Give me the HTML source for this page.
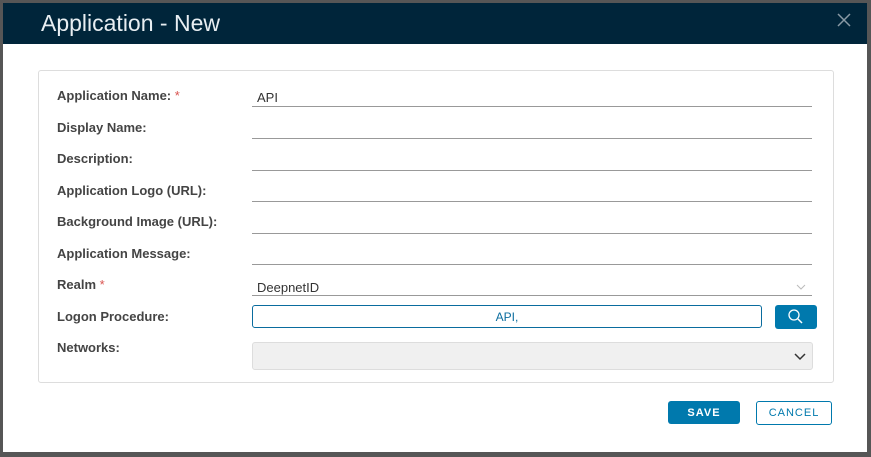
<!DOCTYPE html>
<html><head><style>
body{margin:0;width:871px;height:457px;background:#565656;position:relative;overflow:hidden;font-family:"Liberation Sans",sans-serif}
.dlg{position:absolute;left:3px;top:3px;width:864px;height:449px;background:#fff}
.hd{height:41px;background:#00253a;color:#e8eef2;font-size:23px;line-height:40px;padding-left:38px}
.x{position:absolute;right:16px;top:10px}
.card{position:absolute;left:35px;top:67px;width:794px;height:311px;border:1px solid #ddd;border-radius:3px}
.lb{position:absolute;left:54px;font-size:13px;font-weight:bold;color:#444}
.req{color:#d9534f;font-weight:normal}
.in{position:absolute;left:249px;width:560px;height:20px;border-bottom:1px solid #999;font-size:13px;color:#333;padding-left:5px;box-sizing:border-box;line-height:24px}
.btn{position:absolute;font-size:11px;font-weight:bold;letter-spacing:1px;text-align:center;line-height:24px;border-radius:3px}
</style></head><body>
<div class="dlg">
<div class="hd">Application - New</div>
<svg class="x" width="14" height="14"><path d="M1 1L13 13M13 1L1 13" stroke="#8a9aa5" stroke-width="1.5"/></svg>
<div class="card"></div>
<div class="lb" style="top:85px">Application Name: <span class="req">*</span></div>
<div class="in" style="top:83px;height:21px">API</div>
<div class="lb" style="top:117px">Display Name:</div><div class="in" style="top:116px"></div>
<div class="lb" style="top:148px">Description:</div><div class="in" style="top:148px"></div>
<div class="lb" style="top:180px">Application Logo (URL):</div><div class="in" style="top:179px"></div>
<div class="lb" style="top:211px">Background Image (URL):</div><div class="in" style="top:211px"></div>
<div class="lb" style="top:243px">Application Message:</div><div class="in" style="top:242px"></div>
<div class="lb" style="top:274px">Realm <span class="req">*</span></div>
<div class="in" style="top:273px">DeepnetID<svg style="position:absolute;right:6px;top:8px" width="10" height="6"><path d="M1 1L5 5L9 1" stroke="#bbb" fill="none"/></svg></div>
<div class="lb" style="top:306px">Logon Procedure:</div>
<div style="position:absolute;left:249px;top:302px;width:510px;height:23px;border:1px solid #0a6c9e;border-radius:3px;box-sizing:border-box;text-align:center;font-size:12px;color:#0a6c9e;line-height:23px">API,</div>
<div style="position:absolute;left:772px;top:302px;width:42px;height:24px;background:#0079ad;border-radius:3px"><svg width="42" height="24"><circle cx="19" cy="10" r="5" stroke="#fff" fill="none" stroke-width="1.3"/><path d="M23 14L27 18" stroke="#fff" stroke-width="1.5"/></svg></div>
<div class="lb" style="top:337px">Networks:</div>
<div style="position:absolute;left:249px;top:339px;width:561px;height:28px;background:#f0f0f0;border:1px solid #ddd;border-radius:3px;box-sizing:border-box"><svg style="position:absolute;right:6px;top:10px" width="12" height="8"><path d="M1 1L6 6L11 1" stroke="#333" fill="none" stroke-width="1.5"/></svg></div>
<div class="btn" style="left:665px;top:398px;width:72px;background:#0079ad;color:#fff;height:23px">SAVE</div>
<div class="btn" style="left:753px;top:398px;width:76px;border:1px solid #0079ad;color:#0079ad;box-sizing:border-box;height:24px;line-height:23px;font-weight:normal">CANCEL</div>
</div>
</body></html>
